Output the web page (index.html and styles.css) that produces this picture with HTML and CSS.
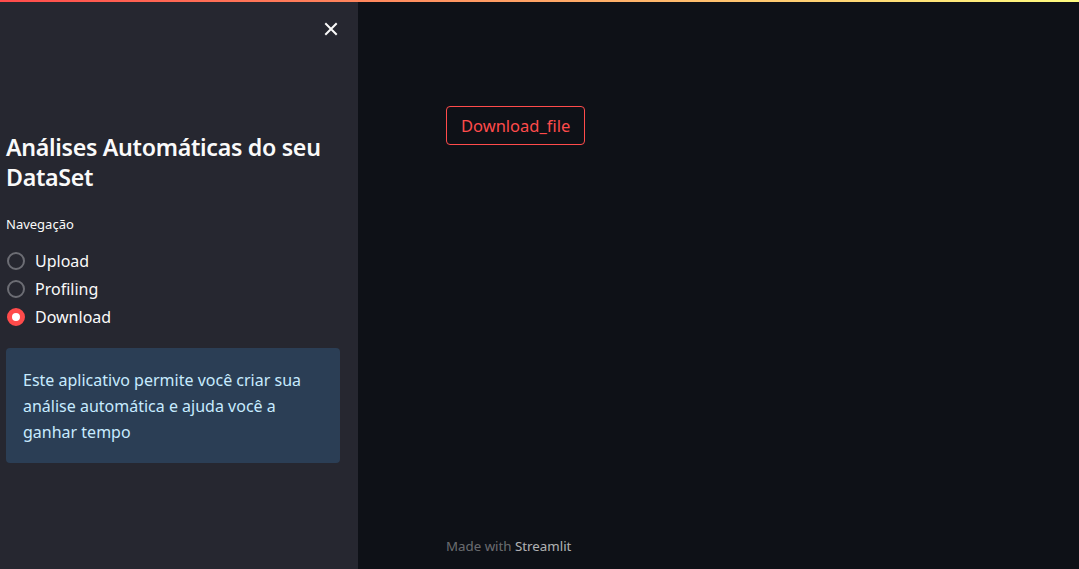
FILE: index.html
```html
<!DOCTYPE html>
<html lang="pt">
<head>
<meta charset="utf-8">
<title>Streamlit</title>
<link rel="stylesheet" href="styles.css">
</head>
<body>
<div class="decoration"></div>
<div class="app">
  <aside class="sidebar">
    <div class="close-row">
      <button class="close-btn" aria-label="Fechar">
        <svg width="14" height="14" viewBox="0 0 14 14"><path d="M2 2 L12 12 M12 2 L2 12" stroke="#fafafa" stroke-width="2" stroke-linecap="square"/></svg>
      </button>
    </div>
    <div class="sidebar-content">
      <h1 class="title">Análises Automáticas do seu DataSet</h1>
      <div class="nav-label">Navegação</div>
      <div class="radios">
        <label class="radio"><span class="dot"></span>Upload</label>
        <label class="radio"><span class="dot"></span>Profiling</label>
        <label class="radio active"><span class="dot"></span>Download</label>
      </div>
      <div class="info">Este aplicativo permite você criar sua análise automática e ajuda você a ganhar tempo</div>
    </div>
  </aside>
  <main class="main">
    <div class="main-block">
      <button class="dl-btn">Download_file</button>
    </div>
    <footer class="footer">Made with <span class="brand">Streamlit</span></footer>
  </main>
</div>
</body>
</html>
```
FILE: styles.css
```css
* { box-sizing: border-box; }
html, body { margin: 0; padding: 0; height: 100%; }
body {
  background: #0e1117;
  color: #fafafa;
  font-family: "Source Sans Pro", "Noto Sans", "Liberation Sans", sans-serif;
  overflow: hidden;
}
.decoration {
  height: 2px;
  background: linear-gradient(90deg, #ff4b4b, #fffd80);
}
.app {
  display: flex;
  height: 567px;
}
.sidebar {
  width: 358px;
  flex: none;
  background: #262730;
  display: flex;
  flex-direction: column;
}
.close-row {
  display: flex;
  justify-content: flex-end;
  padding: 17px 17px 0 0;
}
.close-btn {
  background: none;
  border: none;
  padding: 3px;
  display: flex;
  cursor: pointer;
}
.sidebar-content {
  padding: 93px 18px 0 6px;
}
.title {
  margin: 0;
  font-size: 23.2px;
  font-weight: 600;
  line-height: 30px;
  letter-spacing: -0.3px;
}
.nav-label {
  margin-top: 23px;
  font-size: 13px;
  line-height: 18px;
}
.radios {
  margin-top: 17px;
  display: flex;
  flex-direction: column;
  gap: 6px;
}
.radio {
  display: flex;
  align-items: center;
  font-size: 16px;
  line-height: 22px;
  gap: 10px;
  padding-left: 1px;
}
.dot {
  width: 18px;
  height: 18px;
  border-radius: 50%;
  border: 2px solid #6c6d74;
  display: inline-block;
  box-sizing: border-box;
}
.radio.active .dot {
  border: 5px solid #ff4b4b;
  background: #fff;
}
.info {
  margin-top: 20px;
  background: #2b3e55;
  color: #c7ebff;
  border-radius: 4px;
  padding: 19px 17px 18px 17px;
  font-size: 16px;
  line-height: 26px;
}
.main {
  flex: 1;
  display: flex;
  flex-direction: column;
  padding: 0 0 0 88px;
}
.main-block {
  padding-top: 104px;
  flex: 1;
}
.dl-btn {
  font-family: inherit;
  background: #0e1117;
  color: #ff4b4b;
  border: 1px solid #ff4b4b;
  border-radius: 4px;
  font-size: 16.5px;
  height: 39px;
  padding: 0 14px;
}
.footer {
  font-size: 13.3px;
  color: rgba(250,250,250,0.4);
  padding-bottom: 14px;
}
.brand { color: rgba(250,250,250,0.7); }
```
